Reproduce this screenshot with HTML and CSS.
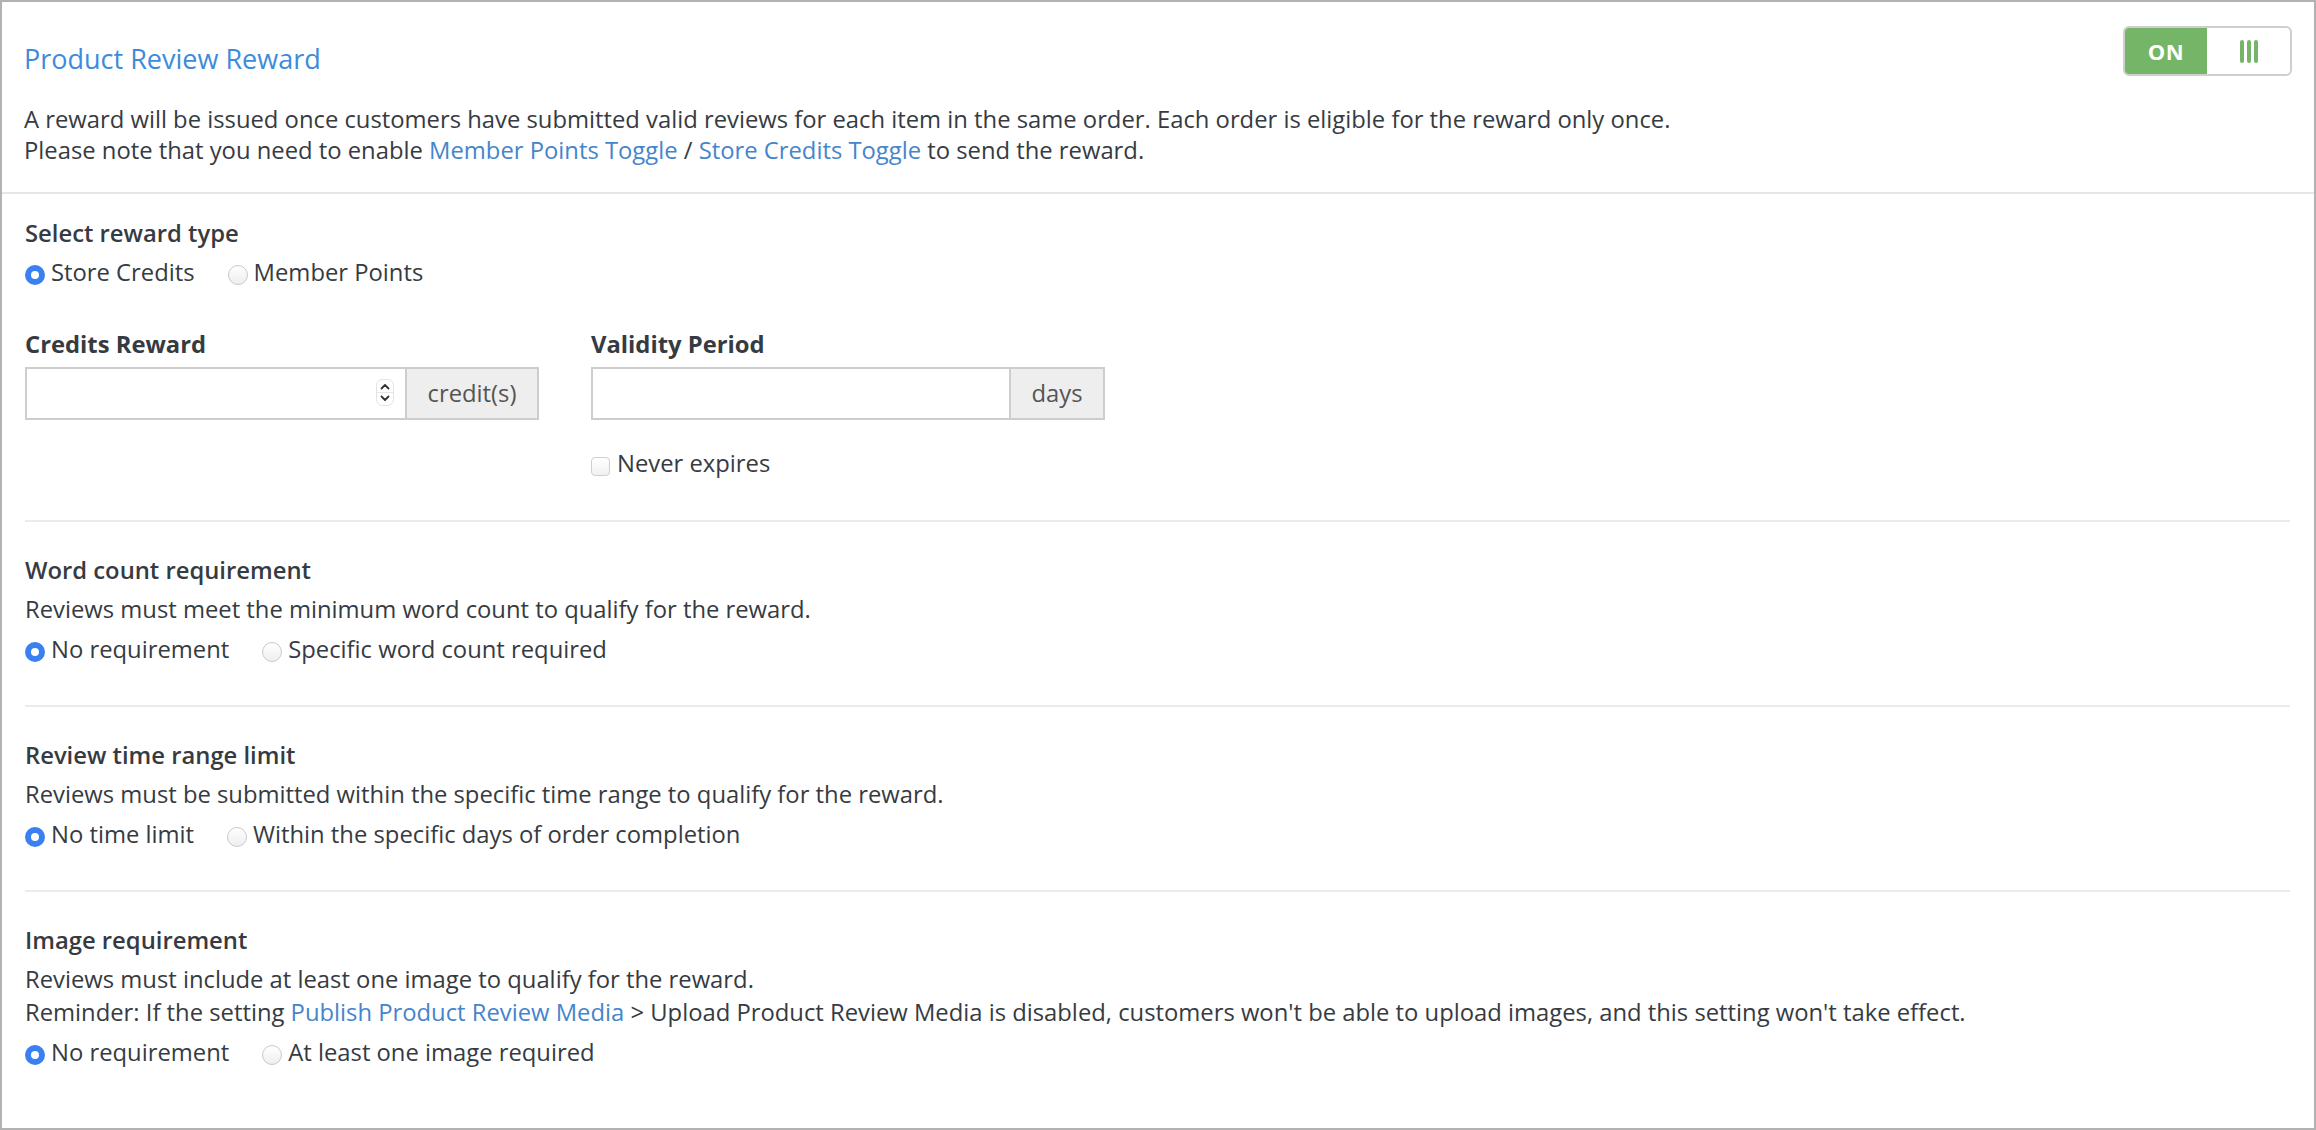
FILE: index.html
```html
<!DOCTYPE html>
<html lang="en">
<head>
    <meta charset="UTF-8">
    <meta name="viewport" content="width=device-width, initial-scale=1.0">
    <title>Product Review Reward</title>
    <link rel="stylesheet" href="styles.css">
</head>
<body>
    <div class="panel">
        <div class="panel-head">
            <div class="head-top">
                <h1 class="title">Product Review Reward</h1>
                <div class="toggle">
                    <span class="toggle-on">ON</span>
                    <span class="toggle-handle"><i></i><i></i><i></i></span>
                </div>
            </div>
            <p class="intro">
                A reward will be issued once customers have submitted valid reviews for each item in the same order. Each order is eligible for the reward only once.<br>
                Please note that you need to enable <a href="#">Member Points Toggle</a> / <a href="#">Store Credits Toggle</a> to send the reward.
            </p>
        </div>

        <div class="section first">
            <div class="heading">Select reward type</div>
            <div class="options">
                <label class="radio"><input type="radio" name="type" checked> Store Credits</label>
                <label class="radio"><input type="radio" name="type"> Member Points</label>
            </div>

            <div class="fields">
                <div class="field">
                    <div class="label">Credits Reward</div>
                    <div class="input-group">
                        <div class="input-wrap">
                            <input type="text" class="input">
                            <span class="spinner">
                                <svg width="18" height="27" viewBox="0 0 18 27">
                                    <rect x="0.5" y="0.5" width="17" height="26" rx="6" fill="#fff" stroke="#e2e2e2"/>
                                    <line x1="1" y1="13.5" x2="17" y2="13.5" stroke="#e6e6e6"/>
                                    <path d="M5.5 9.5 L9 6 L12.5 9.5" fill="none" stroke="#333" stroke-width="1.8" stroke-linecap="round" stroke-linejoin="round"/>
                                    <path d="M5.5 17.5 L9 21 L12.5 17.5" fill="none" stroke="#333" stroke-width="1.8" stroke-linecap="round" stroke-linejoin="round"/>
                                </svg>
                            </span>
                        </div>
                        <span class="addon credit">credit(s)</span>
                    </div>
                </div>
                <div class="field">
                    <div class="label">Validity Period</div>
                    <div class="input-group">
                        <div class="input-wrap">
                            <input type="text" class="input">
                        </div>
                        <span class="addon days">days</span>
                    </div>
                    <label class="check"><input type="checkbox"> Never expires</label>
                </div>
            </div>
        </div>

        <div class="section">
            <div class="heading">Word count requirement</div>
            <p class="desc">Reviews must meet the minimum word count to qualify for the reward.</p>
            <div class="options">
                <label class="radio"><input type="radio" name="words" checked> No requirement</label>
                <label class="radio"><input type="radio" name="words"> Specific word count required</label>
            </div>
        </div>

        <div class="section">
            <div class="heading">Review time range limit</div>
            <p class="desc">Reviews must be submitted within the specific time range to qualify for the reward.</p>
            <div class="options">
                <label class="radio"><input type="radio" name="time" checked> No time limit</label>
                <label class="radio"><input type="radio" name="time"> Within the specific days of order completion</label>
            </div>
        </div>

        <div class="section last">
            <div class="heading">Image requirement</div>
            <p class="desc">Reviews must include at least one image to qualify for the reward.</p>
            <p class="desc">Reminder: If the setting <a href="#">Publish Product Review Media</a> &gt; Upload Product Review Media is disabled, customers won't be able to upload images, and this setting won't take effect.</p>
            <div class="options">
                <label class="radio"><input type="radio" name="image" checked> No requirement</label>
                <label class="radio"><input type="radio" name="image"> At least one image required</label>
            </div>
        </div>
    </div>
</body>
</html>
```

FILE: styles.css
```css
body{
    margin: 0;
    padding: 0;
    background: #fff;
    font-family: "Open Sans", "Liberation Sans", sans-serif;
    font-size: 23.8px;
    line-height: 31px;
    color: #363b42;
}
a{
    color: #4585cc;
    text-decoration: none;
}
p{
    margin: 0;
}
.panel{
    height: 1130px;
    box-sizing: border-box;
    border: 2px solid #b2b2b2;
    background: #fff;
}
.panel-head{
    padding: 24px 22px 26px 22px;
    border-bottom: 2px solid #e6e6e6;
}
.head-top{
    display: flex;
    justify-content: space-between;
    align-items: flex-start;
}
.title{
    margin: 14px 0 0;
    font-size: 27px;
    line-height: 37px;
    font-weight: 400;
    color: #3d8bdb;
}
.intro{
    margin-top: 27px;
}
/* toggle */
.toggle{
    display: flex;
    width: 169px;
    height: 50px;
    box-sizing: border-box;
    border: 2px solid #cfcfcf;
    border-radius: 6px;
    overflow: hidden;
}
.toggle-on{
    width: 82px;
    background: #74b567;
    color: #fff;
    font-weight: 700;
    font-size: 22px;
    display: flex;
    align-items: center;
    justify-content: center;
    letter-spacing: 0.5px;
}
.toggle-handle{
    flex: 1;
    display: flex;
    align-items: center;
    justify-content: center;
    gap: 3px;
}
.toggle-handle i{
    width: 4px;
    height: 23px;
    border-radius: 2px;
    background: #74b567;
}
/* sections */
.section{
    margin: 0 24px 0 23px;
    padding: 33px 0 40px;
    border-top: 2px solid #ebebeb;
}
.section.first{
    margin: 0;
    padding: 24px 24px 41px 23px;
    border-top: 0;
}
.heading{
    font-weight: 600;
    margin-bottom: 8px;
}
.desc{
    margin-bottom: 2px;
}
.section .desc:last-of-type{
    margin-bottom: 9px;
}
.options{
    display: flex;
    gap: 33px;
}
.radio{
    display: flex;
    align-items: center;
}
.radio input{
    appearance: none;
    -webkit-appearance: none;
    width: 20px;
    height: 20px;
    margin: 5px 6px 0 0;
    border-radius: 50%;
    border: 1px solid #c9c9c9;
    background: linear-gradient(#fff, #eeeeee);
    box-sizing: border-box;
}
.radio input:checked{
    border: 6px solid #3b80f0;
    background: #fff;
}
/* fields */
.fields{
    display: flex;
    gap: 52px;
    margin-top: 41px;
}
.field{
    width: 514px;
}
.label{
    font-weight: 700;
    margin-bottom: 7px;
}
.input-group{
    display: flex;
    height: 53px;
    box-sizing: border-box;
    border: 2px solid #cdcdcd;
}
.input-wrap{
    flex: 1;
    position: relative;
}
.input{
    width: 100%;
    height: 100%;
    border: 0;
    padding: 0 12px;
    box-sizing: border-box;
    font: inherit;
    outline: none;
}
.spinner{
    position: absolute;
    right: 11px;
    top: 10px;
    line-height: 0;
}
.addon{
    display: flex;
    align-items: center;
    justify-content: center;
    background: #eeeeee;
    color: #555;
    border-left: 2px solid #cdcdcd;
}
.addon.credit{
    width: 130px;
}
.addon.days{
    width: 92px;
}
.check{
    display: flex;
    align-items: center;
    margin-top: 28px;
}
.check input{
    appearance: none;
    -webkit-appearance: none;
    width: 19px;
    height: 19px;
    margin: 6px 7px 0 0;
    border: 1px solid #cfcfcf;
    border-radius: 4px;
    background: linear-gradient(#fff, #f1f1f1);
    box-sizing: border-box;
}
```
